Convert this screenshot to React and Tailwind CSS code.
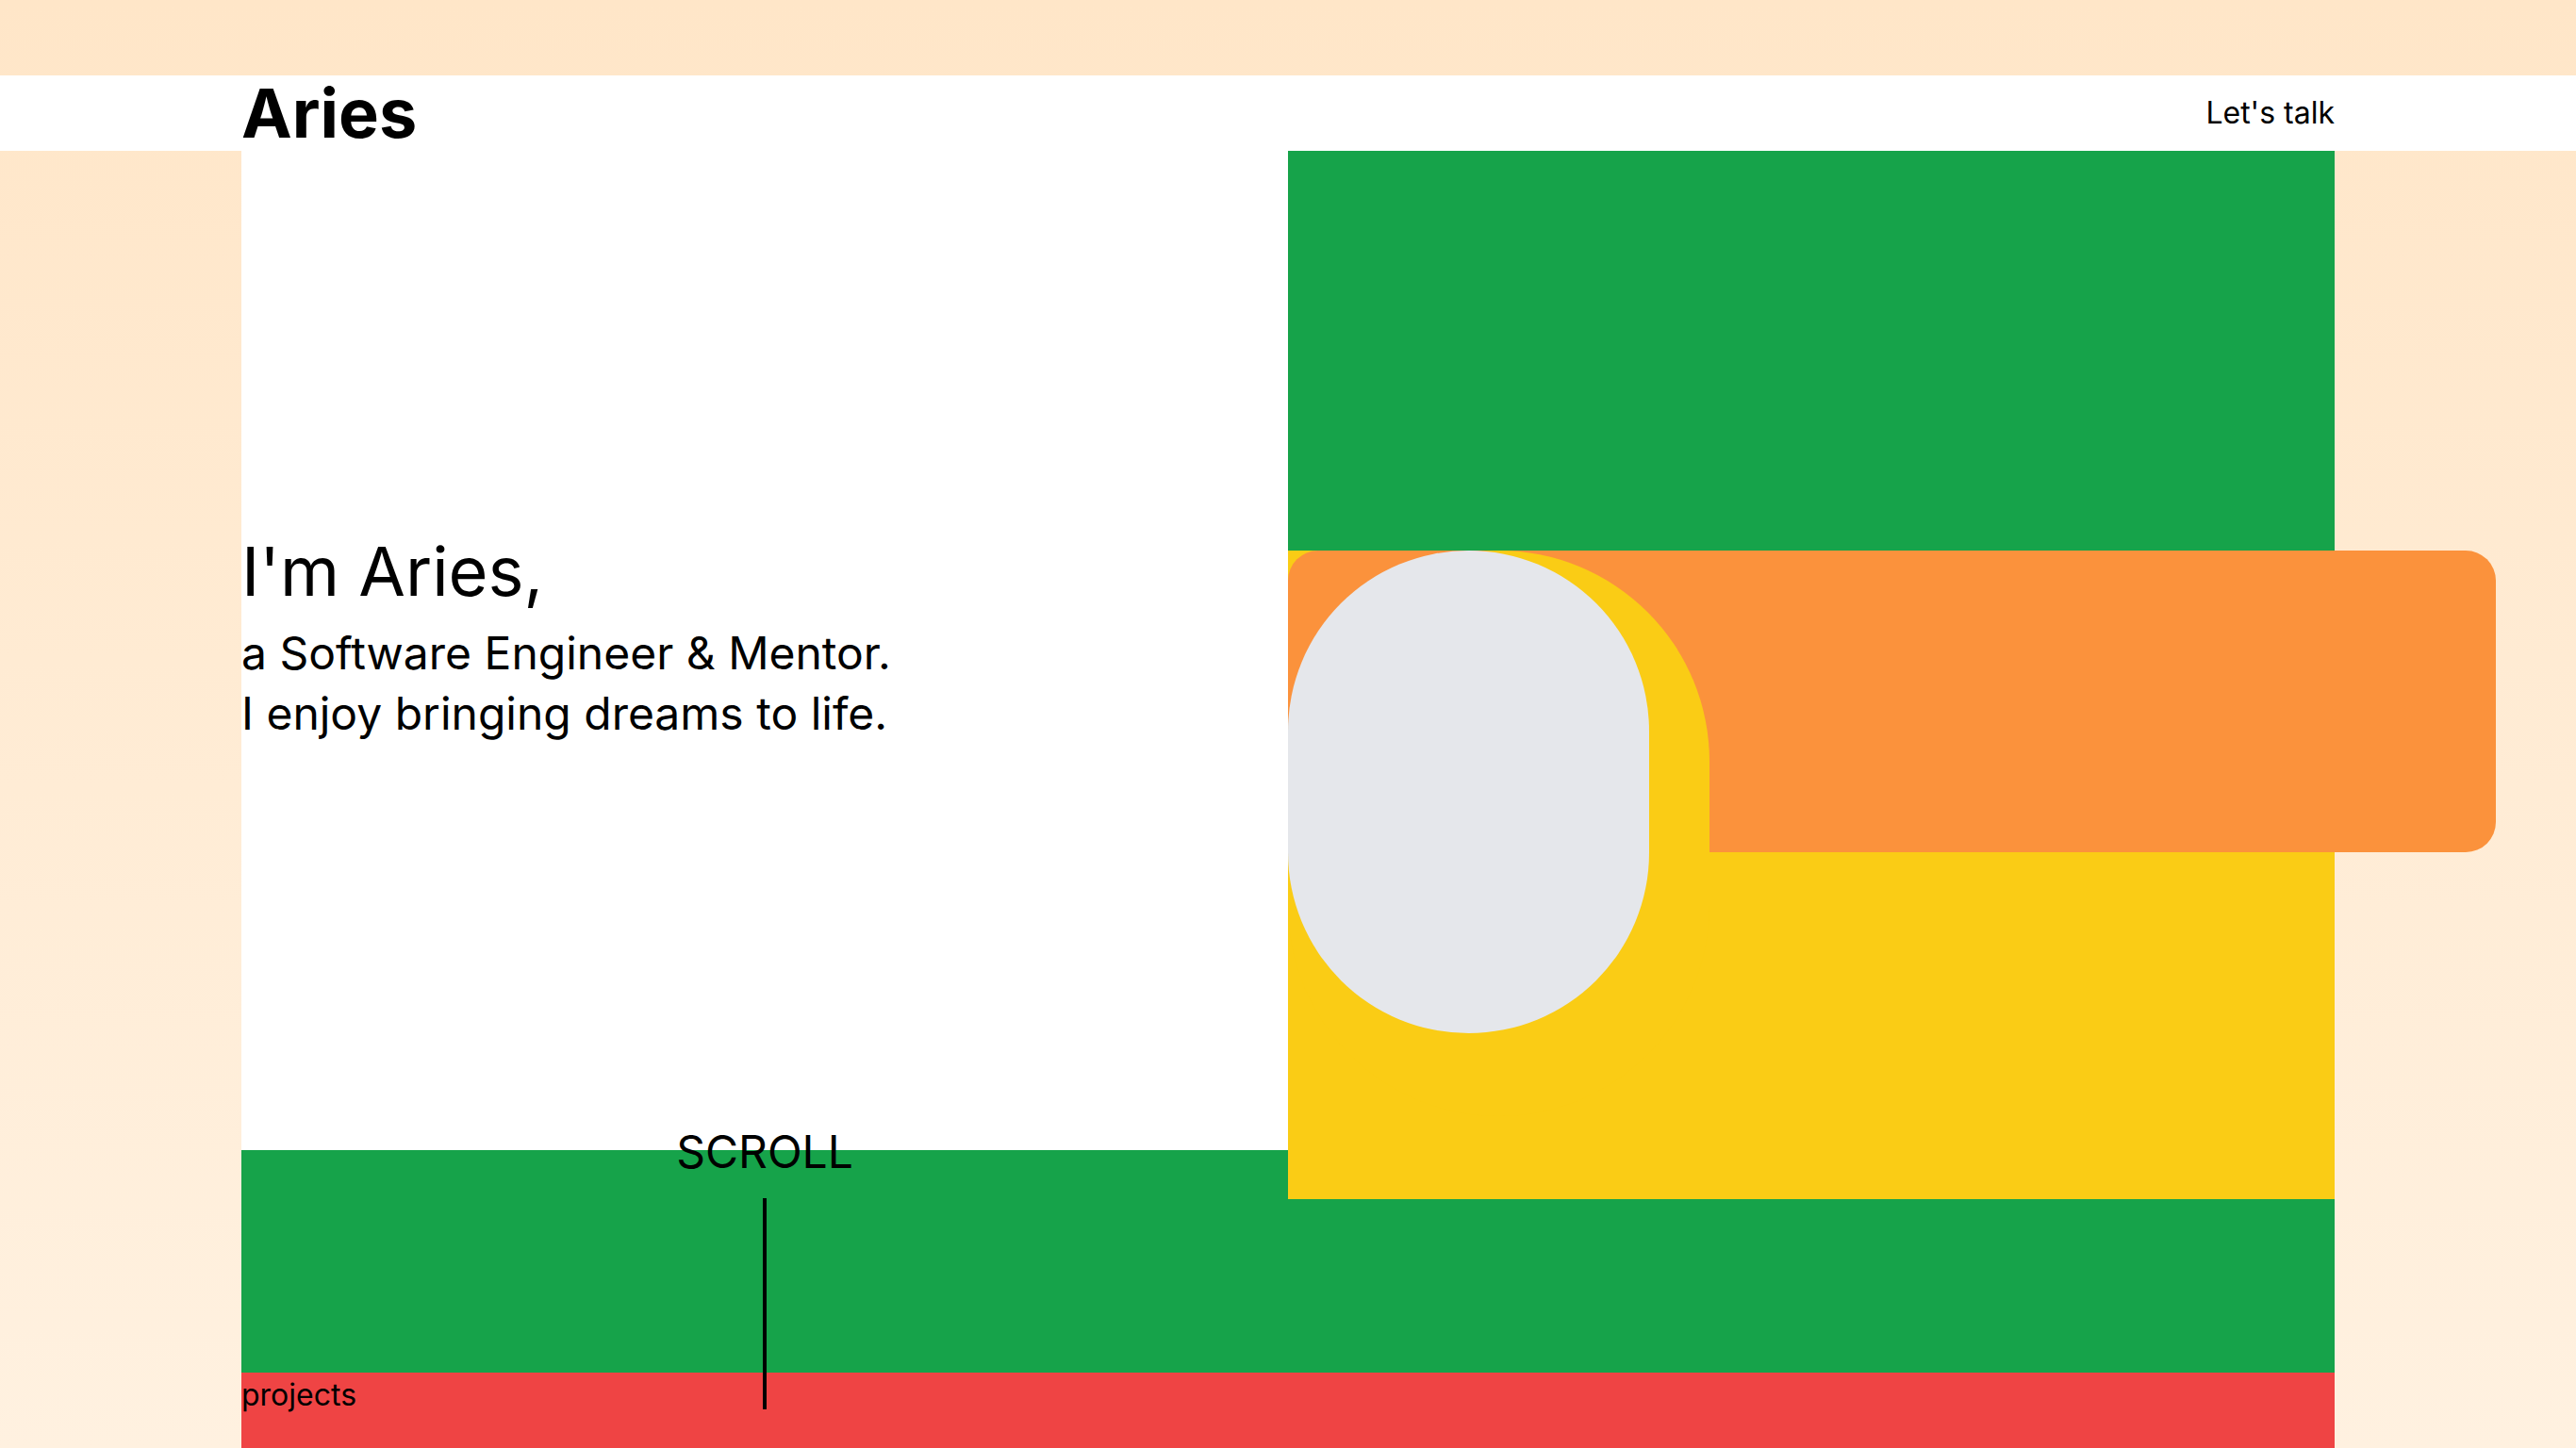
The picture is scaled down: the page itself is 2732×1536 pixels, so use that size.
export default function App() {
  return (
    <div className="min-h-screen bg-gradient-to-b from-[#ffe6c8] to-[#fff1e0] pt-20 font-['Inter',sans-serif] text-black">
      <header className="h-20 bg-white">
        <div className="mx-auto flex h-full max-w-[2220px] items-center justify-between">
          <a href="#" className="text-[72px] font-bold leading-none">Aries</a>
          <a href="#" className="text-[32px] leading-none">Let's talk</a>
        </div>
      </header>

      <main className="mx-auto max-w-[2220px]">
        {/* hero */}
        <section className="relative flex h-[1296px] bg-[#16a34a]">
          <div className="h-[1060px] w-[1110px] bg-white pt-[410px]">
            <h1 className="mb-[19px] text-[72px] font-normal leading-none">I'm Aries,</h1>
            <p className="text-[48px] leading-[64px]">
              a Software Engineer &amp; Mentor.
              <br />
              I enjoy bringing dreams to life.
            </p>
          </div>

          <div className="w-[1110px] pt-[424px]">
            <div className="relative h-[688px] bg-[#facc15]">
              <div className="absolute left-0 top-0 h-[320px] w-[1281px] rounded-[32px] bg-[#fb923c]" />
              <div className="absolute left-0 top-0 h-[600px] w-[447px] rounded-full bg-[#facc15]" />
              <div className="absolute left-0 top-0 h-[512px] w-[383px] rounded-full bg-[#e5e7eb]" />
            </div>
          </div>

          <div className="absolute left-0 top-[1038px] z-10 flex w-[1110px] flex-col items-center">
            <span className="text-[48px] leading-none">SCROLL</span>
            <span className="mt-[25px] h-[224px] w-1 bg-black" />
          </div>
        </section>

        <section className="h-20 bg-[#ef4444]">
          <h2 className="text-[32px] leading-[48px]">projects</h2>
        </section>
      </main>
    </div>
  );
}
